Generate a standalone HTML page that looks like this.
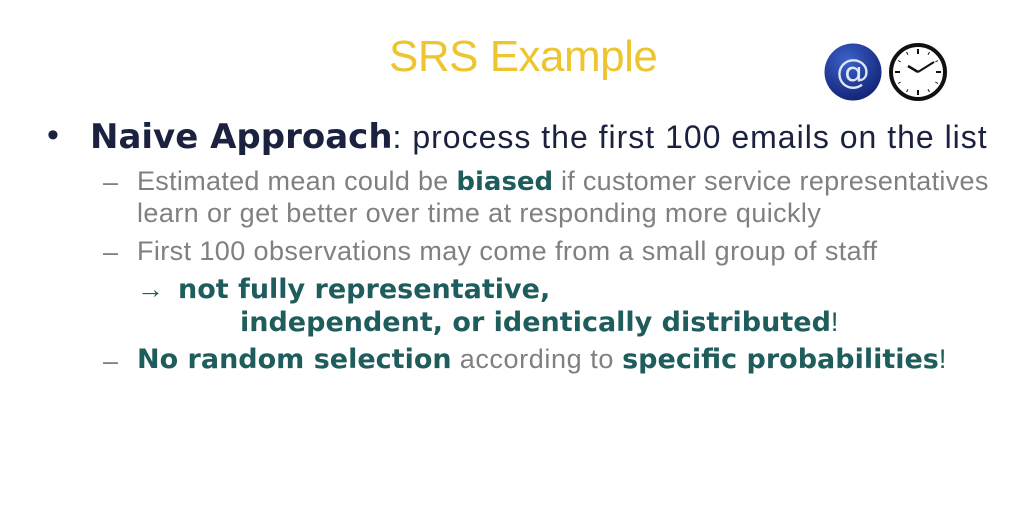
<!DOCTYPE html>
<html><head><meta charset="utf-8"><style>
html,body{margin:0;padding:0;background:#fff;}
body{width:1027px;height:517px;position:relative;overflow:hidden;font-family:"Liberation Sans",sans-serif;}
.l{position:absolute;white-space:nowrap;transform-origin:0 50%;}
.b{font-family:"DejaVu Sans",sans-serif;font-weight:bold;letter-spacing:0;}
.g{color:#808080;}
.t{color:#1f5c5c;}
</style></head><body>
<div class="l" style="left:389px;top:32px;font-size:44px;color:#ecc530;letter-spacing:-0.5px;">SRS Example</div>
<svg style="position:absolute;left:823px;top:42px" width="60" height="60" viewBox="0 0 60 60">
<defs><radialGradient id="bg" cx="40%" cy="30%" r="70%"><stop offset="0" stop-color="#3b63c9"/><stop offset="1" stop-color="#14257a"/></radialGradient></defs>
<circle cx="30" cy="30" r="28.5" fill="url(#bg)"/>
<text x="30" y="41" font-family="DejaVu Sans" font-size="34" fill="#dfe6f5" text-anchor="middle">@</text>
</svg>
<svg style="position:absolute;left:888px;top:42px" width="60" height="60" viewBox="0 0 60 60">
<circle cx="30" cy="30" r="27" fill="#fff" stroke="#111" stroke-width="4"/>
<g stroke="#111" stroke-width="2">
<line x1="30" y1="7" x2="30" y2="12"/><line x1="30" y1="48" x2="30" y2="53"/>
<line x1="7" y1="30" x2="12" y2="30"/><line x1="48" y1="30" x2="53" y2="30"/>
</g>
<g stroke="#111" stroke-width="1">
<line x1="41.5" y1="10" x2="40" y2="12.7"/><line x1="50" y1="18.5" x2="47.3" y2="20"/>
<line x1="50" y1="41.5" x2="47.3" y2="40"/><line x1="41.5" y1="50" x2="40" y2="47.3"/>
<line x1="18.5" y1="50" x2="20" y2="47.3"/><line x1="10" y1="41.5" x2="12.7" y2="40"/>
<line x1="10" y1="18.5" x2="12.7" y2="20"/><line x1="18.5" y1="10" x2="20" y2="12.7"/>
</g>
<line x1="30" y1="30" x2="20" y2="24" stroke="#111" stroke-width="2.5"/>
<line x1="30" y1="30" x2="46" y2="20" stroke="#111" stroke-width="2"/>
</svg>
<div class="l" style="left:47px;top:116px;font-size:34px;color:#1a2240;">•</div>
<div class="l" style="left:90px;top:117px;font-size:34px;color:#1a2240;"><span class="b">Naive Approach</span><span style="font-size:32px;letter-spacing:1px">: process the first 100 emails on the list</span></div>
<div class="l g" style="left:103px;top:167px;font-size:27px;">–</div>
<div class="l g" style="left:137px;top:166px;font-size:27px;letter-spacing:0.3px;">Estimated mean could be <span class="b t" style="font-size:26px;">biased</span> if customer service representatives</div>
<div class="l g" style="left:137px;top:198px;font-size:27px;letter-spacing:0.4px;">learn or get better over time at responding more quickly</div>
<div class="l g" style="left:103px;top:237px;font-size:27px;">–</div>
<div class="l g" style="left:137px;top:236px;font-size:27px;letter-spacing:0.4px;">First 100 observations may come from a small group of staff</div>
<div class="l t" style="left:137px;top:274px;font-size:27px;"><span style="display:inline-block;width:41px;font-family:'Liberation Sans';font-size:27px">→</span><span class="b">not fully representative,</span></div>
<div class="l t" style="left:240px;top:307px;font-size:27px;"><span class="b">independent, or identically distributed</span><span style="font-family:'Liberation Sans'">!</span></div>
<div class="l g" style="left:103px;top:346px;font-size:27px;">–</div>
<div class="l" style="left:137px;top:344px;font-size:27px;"><span class="b t" style="font-size:27px">No random selection</span><span class="g" style="letter-spacing:0.6px"> according to </span><span class="b t" style="font-size:27px">specific probabilities</span><span class="t">!</span></div>
</body></html>
